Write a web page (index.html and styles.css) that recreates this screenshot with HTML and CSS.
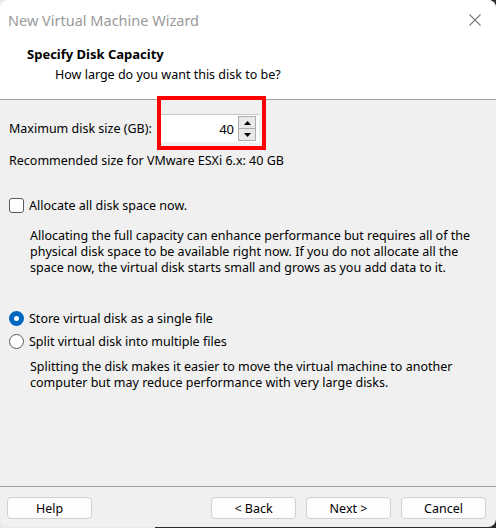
FILE: index.html
```html
<!DOCTYPE html>
<html lang="en">
<head>
  <meta charset="UTF-8" />
  <title>New Virtual Machine Wizard</title>
  <link rel="stylesheet" href="styles.css">
</head>
<body>
  <div class="window">
    <div class="titlebar">
      <span class="title">New Virtual Machine Wizard</span>
      <svg class="close" width="12" height="12" viewBox="0 0 12 12">
        <path d="M0.5 0.5 L11.5 11.5 M11.5 0.5 L0.5 11.5" stroke="#7a7a7a" stroke-width="1.1" fill="none"/>
      </svg>
    </div>

    <div class="header">
      <h1>Specify Disk Capacity</h1>
      <p>How large do you want this disk to be?</p>
    </div>

    <div class="content">
      <div class="size-row">
        <label>Maximum disk size (GB):</label>
        <div class="spin">
          <div class="spin-value">40</div>
          <div class="spin-buttons">
            <div class="spin-btn">
              <svg width="7" height="4" viewBox="0 0 7 4"><path d="M3.5 0 L7 4 L0 4 Z" fill="#000"/></svg>
            </div>
            <div class="spin-btn">
              <svg width="7" height="4" viewBox="0 0 7 4"><path d="M0 0 L7 0 L3.5 4 Z" fill="#000"/></svg>
            </div>
          </div>
          <div class="highlight"></div>
        </div>
      </div>
      <p class="recommended">Recommended size for VMware ESXi 6.x: 40 GB</p>

      <div class="option check-option">
        <span class="checkbox"></span>
        <span>Allocate all disk space now.</span>
      </div>
      <p class="note">Allocating the full capacity can enhance performance but requires all of the physical disk space to be available right now. If you do not allocate all the space now, the virtual disk starts small and grows as you add data to it.</p>

      <div class="option radio-first">
        <span class="radio checked"></span>
        <span>Store virtual disk as a single file</span>
      </div>
      <div class="option">
        <span class="radio"></span>
        <span>Split virtual disk into multiple files</span>
      </div>
      <p class="note note-tight">Splitting the disk makes it easier to move the virtual machine to another computer but may reduce performance with very large disks.</p>
    </div>

    <div class="footer">
      <button>Help</button>
      <div class="nav">
        <button>&lt; Back</button>
        <button>Next &gt;</button>
        <button>Cancel</button>
      </div>
    </div>
  </div>
</body>
</html>
```

FILE: styles.css
```css
body {
  margin: 0;
  height: 528px;
  background: linear-gradient(to right, #e8e8e8 155px, #2b2b2b 155px);
  font-family: 'Noto Sans', 'Open Sans', sans-serif;
  font-size: 12.5px;
  color: #000;
  overflow: hidden;
}

.window {
  height: 527px;
  border-radius: 8px;
  overflow: hidden;
  background: #f0f0f0;
  display: flex;
  flex-direction: column;
}

.titlebar {
  height: 39px;
  background: #fff;
  display: flex;
  align-items: center;
  justify-content: space-between;
  padding: 0 15px 0 8px;
}

.title {
  font-size: 14.5px;
  color: #9a9a9a;
}

.header {
  height: 61px;
  background: #fff;
  border-bottom: 1px solid #a0a0a0;
  box-sizing: border-box;
}

.header h1 {
  margin: 0;
  padding: 6px 0 0 27px;
  font-size: 13px;
  font-weight: bold;
}

.header p {
  margin: 3px 0 0 55px;
}

.content {
  flex: 1;
  padding: 0 9px;
}

.size-row {
  display: flex;
  align-items: center;
  margin-top: 14px;
}

.size-row label {
  width: 148px;
}

.spin {
  position: relative;
  display: flex;
  align-items: center;
  height: 28px;
  width: 102px;
  background: #fff;
  border-top: 1px solid #c8c8c8;
  box-sizing: border-box;
}

.spin-value {
  flex: 1;
  text-align: right;
  padding-right: 4px;
  font-size: 13px;
}

.spin-buttons {
  display: flex;
  flex-direction: column;
  width: 18px;
  margin-right: 3px;
}

.spin-btn {
  height: 11px;
  border: 1px solid #adadad;
  background: #e9e9e9;
  display: flex;
  align-items: center;
  justify-content: center;
}

.spin-btn + .spin-btn {
  border-top: none;
}

/* annotation box drawn over the field */
.highlight {
  position: absolute;
  left: 0;
  top: -19px;
  width: 109px;
  height: 54px;
  border: 4px solid #ff0000;
  box-sizing: border-box;
}

.recommended {
  margin: 10px 0 0;
}

.option {
  display: flex;
  align-items: center;
  gap: 5px;
  height: 23px;
}

.check-option {
  margin-top: 25px;
}

.radio-first {
  margin-top: 31px;
}

.checkbox {
  width: 13px;
  height: 13px;
  border: 1px solid #5a5a5a;
  border-radius: 3px;
  background: #fff;
}

.radio {
  width: 13px;
  height: 13px;
  border: 1px solid #5a5a5a;
  border-radius: 50%;
  background: #fff;
  box-sizing: content-box;
}

.radio.checked {
  width: 5px;
  height: 5px;
  border: 5px solid #0067c0;
}

.note {
  margin: 11px 0 0 21px;
  max-width: 440px;
  line-height: 16px;
}

.note-tight {
  margin-top: 6px;
  line-height: 15.5px;
}

.footer {
  height: 41px;
  border-top: 1px solid #a0a0a0;
  display: flex;
  justify-content: space-between;
  align-items: flex-start;
  padding: 10px 10px 0 7px;
  box-sizing: border-box;
}

.nav {
  display: flex;
  gap: 10px;
}

button {
  width: 85px;
  height: 22px;
  background: #fdfdfd;
  border: 1px solid #d0d0d0;
  border-radius: 4px;
  font-family: inherit;
  font-size: 12.5px;
  color: #000;
  padding: 0;
}
```
